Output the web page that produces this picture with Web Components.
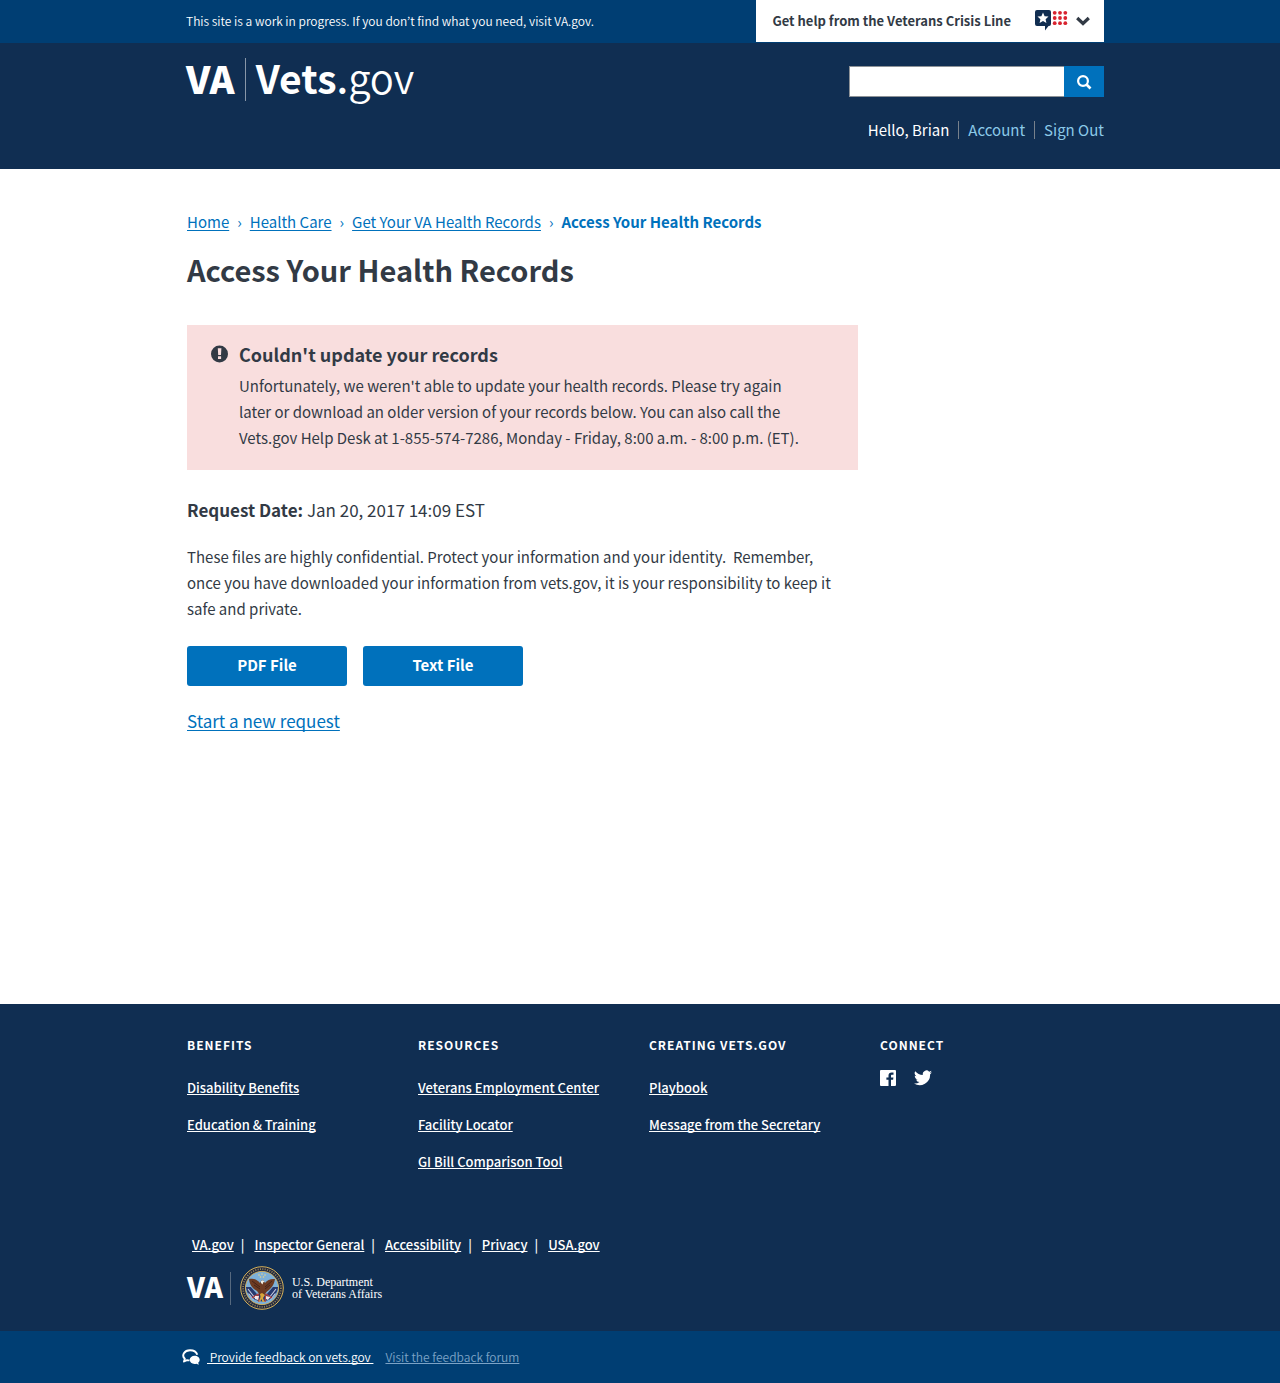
<!DOCTYPE html>
<html lang="en">
<head>
<meta charset="utf-8">
<meta name="viewport" content="width=device-width, initial-scale=1">
<title>Access Your Health Records</title>
<style>
  :root {
    --navy: #102e52;
    --blue-dark: #003e73;
    --blue: #0071bc;
    --ink: #323a45;
    --page: 928px;
  }
  body {
    margin: 0;
    font: 15px/26px "Noto Sans CJK KR", "Noto Sans", sans-serif;
    color: var(--ink);
    background: #fff;
  }
</style>
</head>
<body>
<vets-page>
  <vets-banner slot="top">
    This site is a work in progress. If you don’t find what you need, visit VA.gov.
    <vets-crisis slot="action">Get help from the Veterans Crisis Line</vets-crisis>
  </vets-banner>
  <vets-header slot="top">
    <vets-logo slot="brand"></vets-logo>
    <vets-search slot="tools"></vets-search>
    <vets-user slot="tools">
      Hello, Brian
      <a slot="link" href="#account">Account</a>
      <a slot="link" href="#signout">Sign Out</a>
    </vets-user>
  </vets-header>

  <vets-breadcrumbs>
    <a href="#home">Home</a>
    <a href="#care">Health Care</a>
    <a href="#records">Get Your VA Health Records</a>
    <span slot="current">Access Your Health Records</span>
  </vets-breadcrumbs>
  <vets-title>Access Your Health Records</vets-title>
  <vets-alert>
    <span slot="title">Couldn't update your records</span>
    Unfortunately, we weren't able to update your health records. Please try again later or download an older version of your records below. You can also call the Vets.gov Help Desk at 1-855-574-7286, Monday - Friday, 8:00 a.m. - 8:00 p.m. (ET).
  </vets-alert>
  <vets-request>
    <span slot="date">Jan 20, 2017 14:09 EST</span>
    These files are highly confidential. Protect your information and your identity.&nbsp; Remember, once you have downloaded your information from vets.gov, it is your responsibility to keep it safe and private.
    <vets-button slot="files">PDF File</vets-button>
    <vets-button slot="files">Text File</vets-button>
    <a slot="more" href="#new">Start a new request</a>
  </vets-request>

  <vets-footer slot="bottom">
    <vets-links slot="column">
      <span slot="title">Benefits</span>
      <a href="#disability">Disability Benefits</a>
      <a href="#education">Education &amp; Training</a>
    </vets-links>
    <vets-links slot="column">
      <span slot="title">Resources</span>
      <a href="#employment">Veterans Employment Center</a>
      <a href="#facility">Facility Locator</a>
      <a href="#gibill">GI Bill Comparison Tool</a>
    </vets-links>
    <vets-links slot="column">
      <span slot="title">Creating Vets.gov</span>
      <a href="#playbook">Playbook</a>
      <a href="#message">Message from the Secretary</a>
    </vets-links>
    <vets-links slot="column">
      <span slot="title">Connect</span>
      <vets-social slot="extra"></vets-social>
    </vets-links>
    <vets-legal slot="legal"></vets-legal>
    <vets-department slot="legal"></vets-department>
  </vets-footer>
  <vets-feedback slot="bottom"></vets-feedback>
</vets-page>

<script>
  const define = (name, html) => {
    const template = document.createElement('template');
    template.innerHTML = html;
    customElements.define(name, class extends HTMLElement {
      constructor() {
        super();
        this.attachShadow({ mode: 'open' }).append(template.content.cloneNode(true));
      }
    });
  };

  define('vets-page', `
    <style>
      :host { display: flex; flex-direction: column; min-height: 100vh; }
      main { flex: 1; box-sizing: border-box; width: 100%; max-width: var(--page); margin: 0 auto; padding: 40px 0 40px 11px; }
    </style>
    <slot name="top"></slot>
    <main><slot></slot></main>
    <slot name="bottom"></slot>`);

  define('vets-banner', `
    <style>
      :host { display: block; background: var(--blue-dark); color: #fff; font-size: 12px; font-weight: 350; }
      .bar { display: flex; justify-content: space-between; align-items: flex-start; box-sizing: border-box; max-width: var(--page); margin: 0 auto; padding: 0 0 1px 10px; }
      p { margin: 0; line-height: 42px; }
    </style>
    <div class="bar"><p><slot></slot></p><slot name="action"></slot></div>`);

  define('vets-crisis', `
    <style>
      :host { display: block; }
      button { display: flex; align-items: center; box-sizing: border-box; height: 42px; padding: 0 14px 0 16px; border: 0; background: #fff; color: var(--ink); font: bold 13px/20px "Noto Sans CJK KR", "Noto Sans", sans-serif; cursor: pointer; }
      .mark { margin: 0 8px 0 24px; }
    </style>
    <button type="button">
      <slot></slot>
      <svg class="mark" width="33" height="22" viewBox="0 0 33 22" aria-hidden="true">
        <path fill="#112e51" d="M2 0h12a2 2 0 0 1 2 2v12a2 2 0 0 1-2 2h-.5L10 20.500V16H2a2 2 0 0 1-2-2V2a2 2 0 0 1 2-2z"/>
        <path fill="#fff" d="M8 2.600l1.600 3.600 3.900.4-2.900 2.600.8 3.900L8 11.100l-3.400 2 .8-3.900-2.900-2.600 3.900-.4z"/>
        <g fill="#d8232f">
          <circle cx="19.700" cy="2.800" r="1.900"/><circle cx="25" cy="2.800" r="1.900"/><circle cx="30.300" cy="2.800" r="1.900"/>
          <circle cx="19.700" cy="8" r="1.900"/><circle cx="25" cy="8" r="1.900"/><circle cx="30.300" cy="8" r="1.900"/>
          <circle cx="19.700" cy="13.200" r="1.900"/><circle cx="25" cy="13.200" r="1.900"/><circle cx="30.300" cy="13.200" r="1.900"/>
        </g>
      </svg>
      <svg width="14" height="10" viewBox="0 0 14 10" aria-hidden="true"><path d="M1.200 2L7 7.500 12.800 2" fill="none" stroke="#323a45" stroke-width="3.200"/></svg>
    </button>`);

  define('vets-header', `
    <style>
      :host { display: block; background: var(--navy); color: #fff; }
      header { display: flex; justify-content: space-between; align-items: flex-start; box-sizing: border-box; max-width: var(--page); margin: 0 auto; padding: 0 0 26px 10px; }
      .tools { display: flex; flex-direction: column; align-items: flex-end; gap: 20px; padding-top: 23px; }
    </style>
    <header><slot name="brand"></slot><div class="tools"><slot name="tools"></slot></div></header>`);

  define('vets-logo', `
    <style>
      :host { display: block; padding-top: 11px; }
      a { display: flex; align-items: baseline; color: #fff; text-decoration: none; font-size: 39px; line-height: 46px; }
      .va { font-size: 38px; font-weight: 900; }
      .rule { align-self: flex-end; width: 1px; height: 43px; margin: 0 10px; background: #8896a8; }
      b { font-weight: 700; }
      .dot { font-weight: 500; }
      .gov { font-size: 40px; font-weight: 350; }
    </style>
    <a href="#top"><span class="va">VA</span><span class="rule"></span><span><b>Vets</b><span class="dot">.</span><span class="gov">gov</span></span></a>`);

  define('vets-search', `
    <style>
      :host { display: block; }
      form { display: flex; height: 31px; }
      input { box-sizing: border-box; width: 215px; padding: 0 8px; border: 1px solid #8d9297; border-right: 0; border-radius: 0; background: #fff; font: inherit; outline: 0; }
      button { display: grid; place-items: center; width: 40px; padding: 0; border: 0; background: var(--blue); }
    </style>
    <form role="search">
      <input type="search" aria-label="Search">
      <button type="submit" aria-label="Search"><svg width="16" height="16" viewBox="0 0 16 16"><circle cx="7" cy="7" r="4.900" fill="none" stroke="#fff" stroke-width="2.200"/><path d="M10.500 10.500l4 4" stroke="#fff" stroke-width="2.600"/></svg></button>
    </form>`);

  define('vets-user', `
    <style>
      :host { display: block; }
      nav { display: flex; align-items: center; }
      ::slotted(a) { margin-left: 9px; padding-left: 9px; color: #8bc9e8; text-decoration: none; line-height: 18px; border-left: 1px solid #77818c; }
    </style>
    <nav aria-label="Account"><span><slot></slot></span><slot name="link"></slot></nav>`);

  define('vets-breadcrumbs', `
    <style>
      :host { display: block; color: var(--blue); }
      nav { display: flex; flex-wrap: wrap; align-items: baseline; }
      ::slotted(a) { color: var(--blue); text-underline-offset: 2px; text-decoration-thickness: 1px; text-decoration-skip-ink: none; }
      i { font-style: normal; margin: 0 8px; }
      ::slotted(span) { font-weight: 700; }
    </style>
    <nav aria-label="Breadcrumb"><slot></slot><slot name="current"></slot></nav>`);

  // Chevrons sit between the slotted links, so each link gets its own named slot.
  customElements.whenDefined('vets-breadcrumbs').then(() => {
    document.querySelectorAll('vets-breadcrumbs').forEach(trail => {
      const nav = trail.shadowRoot.querySelector('nav');
      const current = nav.querySelector('slot[name=current]');
      nav.querySelector('slot:not([name])').remove();
      trail.querySelectorAll('a').forEach((link, n) => {
        link.slot = 'step' + n;
        const slot = document.createElement('slot');
        slot.name = link.slot;
        const mark = document.createElement('i');
        mark.textContent = '›';
        nav.insertBefore(slot, current);
        nav.insertBefore(mark, current);
      });
    });
  });

  define('vets-title', `
    <style>
      :host { display: block; margin: 16px 0 38px; }
      h1 { margin: 0; font-size: 29px; line-height: 36px; font-weight: 700; }
    </style>
    <h1><slot></slot></h1>`);

  define('vets-alert', `
    <style>
      :host { display: flex; gap: 11px; box-sizing: border-box; max-width: 671px; padding: 17px 46px 19px 24px; background: #f9dede; }
      svg { flex: none; margin-top: 3px; }
      h2 { margin: 0 0 7px; font-size: 18px; line-height: 24px; font-weight: 700; }
      p { margin: 0; }
    </style>
    <svg width="17" height="18" viewBox="0 0 17 18" aria-hidden="true"><circle cx="8.500" cy="9" r="8.500" fill="#323a45"/><path fill="#f9dede" d="M6.800 3.300h3.600l-.4 6.700H7.200zM7 11.300h3.100v2.600H7z"/></svg>
    <div><h2><slot name="title"></slot></h2><p><slot></slot></p></div>`);

  define('vets-button', `
    <style>
      :host { display: block; }
      button { display: block; width: 160px; height: 40px; padding: 0 0 2px; border: 0; border-radius: 3px; background: var(--blue); color: #fff; font: bold 15px/26px "Noto Sans CJK KR", "Noto Sans", sans-serif; cursor: pointer; }
    </style>
    <button type="button"><slot></slot></button>`);

  define('vets-request', `
    <style>
      :host { display: block; max-width: 660px; padding-top: 27px; }
      .date, .more { font-size: 17px; }
      p { margin: 0; }
      .text { margin: 21px 0 24px; }
      .files { display: flex; flex-wrap: wrap; gap: 16px; margin-bottom: 22px; }
      ::slotted(a) { color: var(--blue); text-underline-offset: 2px; text-decoration-thickness: 1px; text-decoration-skip-ink: none; }
    </style>
    <p class="date"><b>Request Date:</b> <slot name="date"></slot></p>
    <p class="text"><slot></slot></p>
    <div class="files"><slot name="files"></slot></div>
    <p class="more"><slot name="more"></slot></p>`);

  define('vets-footer', `
    <style>
      :host { display: block; background: var(--navy); color: #fff; }
      footer { box-sizing: border-box; max-width: var(--page); margin: 0 auto; padding: 31px 0 21px 11px; }
      .columns { display: grid; grid-template-columns: repeat(4, 1fr); column-gap: 7px; margin-bottom: 63px; }
    </style>
    <footer><div class="columns"><slot name="column"></slot></div><slot name="legal"></slot></footer>`);

  define('vets-links', `
    <style>
      :host { display: block; font-size: 13px; line-height: 20px; }
      h2 { margin: 0; font-size: 12px; line-height: 20px; font-weight: 700; letter-spacing: 1px; text-transform: uppercase; }
      .list { display: flex; flex-direction: column; align-items: flex-start; gap: 17px; padding-top: 23px; }
      ::slotted(a) { color: #fff; font-weight: 500; text-underline-offset: 1px; text-decoration-thickness: 1px; text-decoration-skip-ink: none; }
      ::slotted(vets-social) { margin-top: 15px; }
    </style>
    <h2><slot name="title"></slot></h2>
    <slot name="extra"></slot>
    <div class="list"><slot></slot></div>`);

  define('vets-social', `
    <style>
      :host { display: flex; gap: 18px; }
      a { display: block; height: 16px; }
      svg { display: block; }
    </style>
    <a href="#facebook" aria-label="Facebook"><svg width="16" height="16" viewBox="0 0 16 16"><path fill="#fff" d="M.9 0h14.200c.5 0 .9.400.9.900v14.200c0 .5-.4.900-.9.900H11V9.800h2.100l.3-2.400H11V5.900c0-.7.200-1.200 1.200-1.200h1.300V2.500c-.2 0-1-.1-1.900-.1-1.900 0-3.100 1.100-3.100 3.200v1.800H6.400v2.400h2.100V16H.9c-.5 0-.9-.4-.9-.9V.9C0 .4.400 0 .9 0z"/></svg></a>
    <a href="#twitter" aria-label="Twitter"><svg width="18" height="16" viewBox="0 0 24 20"><path fill="#fff" d="M24 2.400a10 10 0 0 1-2.800.8A5 5 0 0 0 23.300.4a10 10 0 0 1-3.100 1.200 4.900 4.900 0 0 0-8.400 4.500A14 14 0 0 1 1.700.9a4.900 4.900 0 0 0 1.500 6.600 4.900 4.900 0 0 1-2.200-.6 4.900 4.900 0 0 0 4 4.900 5 5 0 0 1-2.300.1 4.900 4.900 0 0 0 4.600 3.400A9.900 9.900 0 0 1 0 17.300 14 14 0 0 0 21.500 4.900 10 10 0 0 0 24 2.400z"/></svg></a>`);

  define('vets-legal', `
    <style>
      :host { display: block; font-size: 13px; line-height: 20px; font-weight: 500; }
      ul { display: flex; flex-wrap: wrap; margin: 0; padding: 0 0 0 5px; list-style: none; }
      li + li::before { content: "|"; margin: 0 10px 0 7px; }
      a { color: #fff; text-underline-offset: 1px; text-decoration-thickness: 1px; text-decoration-skip-ink: none; }
    </style>
    <ul><li><a href="#va">VA.gov</a></li><li><a href="#ig">Inspector General</a></li><li><a href="#access">Accessibility</a></li><li><a href="#privacy">Privacy</a></li><li><a href="#usa">USA.gov</a></li></ul>`);

  define('vets-department', `
    <style>
      :host { display: flex; align-items: center; height: 44px; margin-top: 11px; }
      .va { font-size: 28px; line-height: 40px; padding-bottom: 4px; font-weight: 900; }
      .rule { width: 1px; height: 33px; margin: 0 9px 0 7px; background: #56697f; }
      .name { margin-left: 8px; font: 12px/12px "Liberation Serif", serif; }
      svg { flex: none; }
    </style>
    <span class="va">VA</span><span class="rule"></span>
    <svg width="44" height="44" viewBox="0 0 44 44" aria-hidden="true">
      <circle cx="22" cy="22" r="21.300" fill="#20263f" stroke="#d8b45a" stroke-width="1"/>
      <circle cx="22" cy="22" r="18.900" fill="none" stroke="#8f8358" stroke-width="1.800" stroke-dasharray="1.100 1.300"/>
      <circle cx="22" cy="22" r="16.600" fill="#7db0d8" stroke="#d8b45a" stroke-width=".9"/>
      <path fill="#26396f" d="M5.900 21l5 0 6 7 10 0 6-7 5.200 0a16.200 16.200 0 0 1-32.200 0z"/>
      <path stroke="#c9cbe0" stroke-width="1.100" fill="none" d="M8 23l7 9M8.500 27.500l5 6M36 23l-7 9M35.500 27.500l-5 6"/>
      <path stroke="#b8433f" stroke-width="1.300" fill="none" d="M12 32l6-4 1 8M32 32l-6-4-1 8"/>
      <path fill="#6d3b22" d="M9 13c4-1 8 0 11 4l1.500-2.500h2L25 17c2.500-3.500 6-4.500 10-4-1 6-4 10-8 12.500L24 29h-4l-3-4c-4-2-7.500-6-8-12z"/>
      <path stroke="#3f2119" stroke-width=".9" fill="none" d="M12 15l8 6M14 19l6 4M32 15l-7 6M30 19l-5 4"/>
      <path fill="#f3efe2" d="M21 15l2-.8 1.500 1.600-1.500.7-.3 2-1.700-1.500z"/>
      <path fill="#d9a63a" d="M20 28l2-1 3 2-2 3 1.500 4h-2l-1-3-1.500 3-1-1 1.500-4z"/>
      <path fill="#f1e6e6" d="M15 30l4 0-1 4-3-1zM26 30l4 1-2 3-2-1z"/>
      <g fill="#e8d488"><circle cx="19" cy="9" r=".8"/><circle cx="22" cy="8" r=".8"/><circle cx="25" cy="9" r=".8"/><circle cx="20.500" cy="11" r=".8"/><circle cx="23.500" cy="11" r=".8"/></g>
    </svg>
    <span class="name">U.S. Department<br>of Veterans Affairs</span>`);

  define('vets-feedback', `
    <style>
      :host { display: block; background: var(--blue-dark); color: #fff; font-size: 12px; line-height: 20px; font-weight: 350; }
      div { display: flex; align-items: center; box-sizing: border-box; max-width: var(--page); min-height: 52px; margin: 0 auto; padding-left: 6px; }
      a { color: #fff; white-space: pre; text-underline-offset: 1px; text-decoration-thickness: 1px; text-decoration-skip-ink: none; }
      svg { margin-right: 7px; }
      .forum { margin-left: 12px; color: #7ca3c6; }
    </style>
    <div>
      <svg width="18" height="16" viewBox="0 0 18 16" aria-hidden="true"><path fill="none" stroke="#fff" stroke-width="1.900" stroke-linejoin="round" d="M7.500 11.300c-.9.100-1.600 0-2.400-.2L2 12.500l.8-2.700C-.7 6.500 2.200 1.300 8 1.300c3.800 0 6.500 1.900 7.300 4.500"/><path fill="#fff" d="M12.700 6.800c2.800 0 5 1.700 5 4 0 1.200-.6 2.200-1.500 2.900l.6 2.100-2.400-1.100c-4 .9-6.700-1.200-6.700-3.900 0-2.300 2.200-4 5-4z"/></svg>
      <a href="#feedback"> Provide feedback on vets.gov </a>
      <a class="forum" href="#forum">Visit the feedback forum</a>
    </div>`);
</script>
</body>
</html>
